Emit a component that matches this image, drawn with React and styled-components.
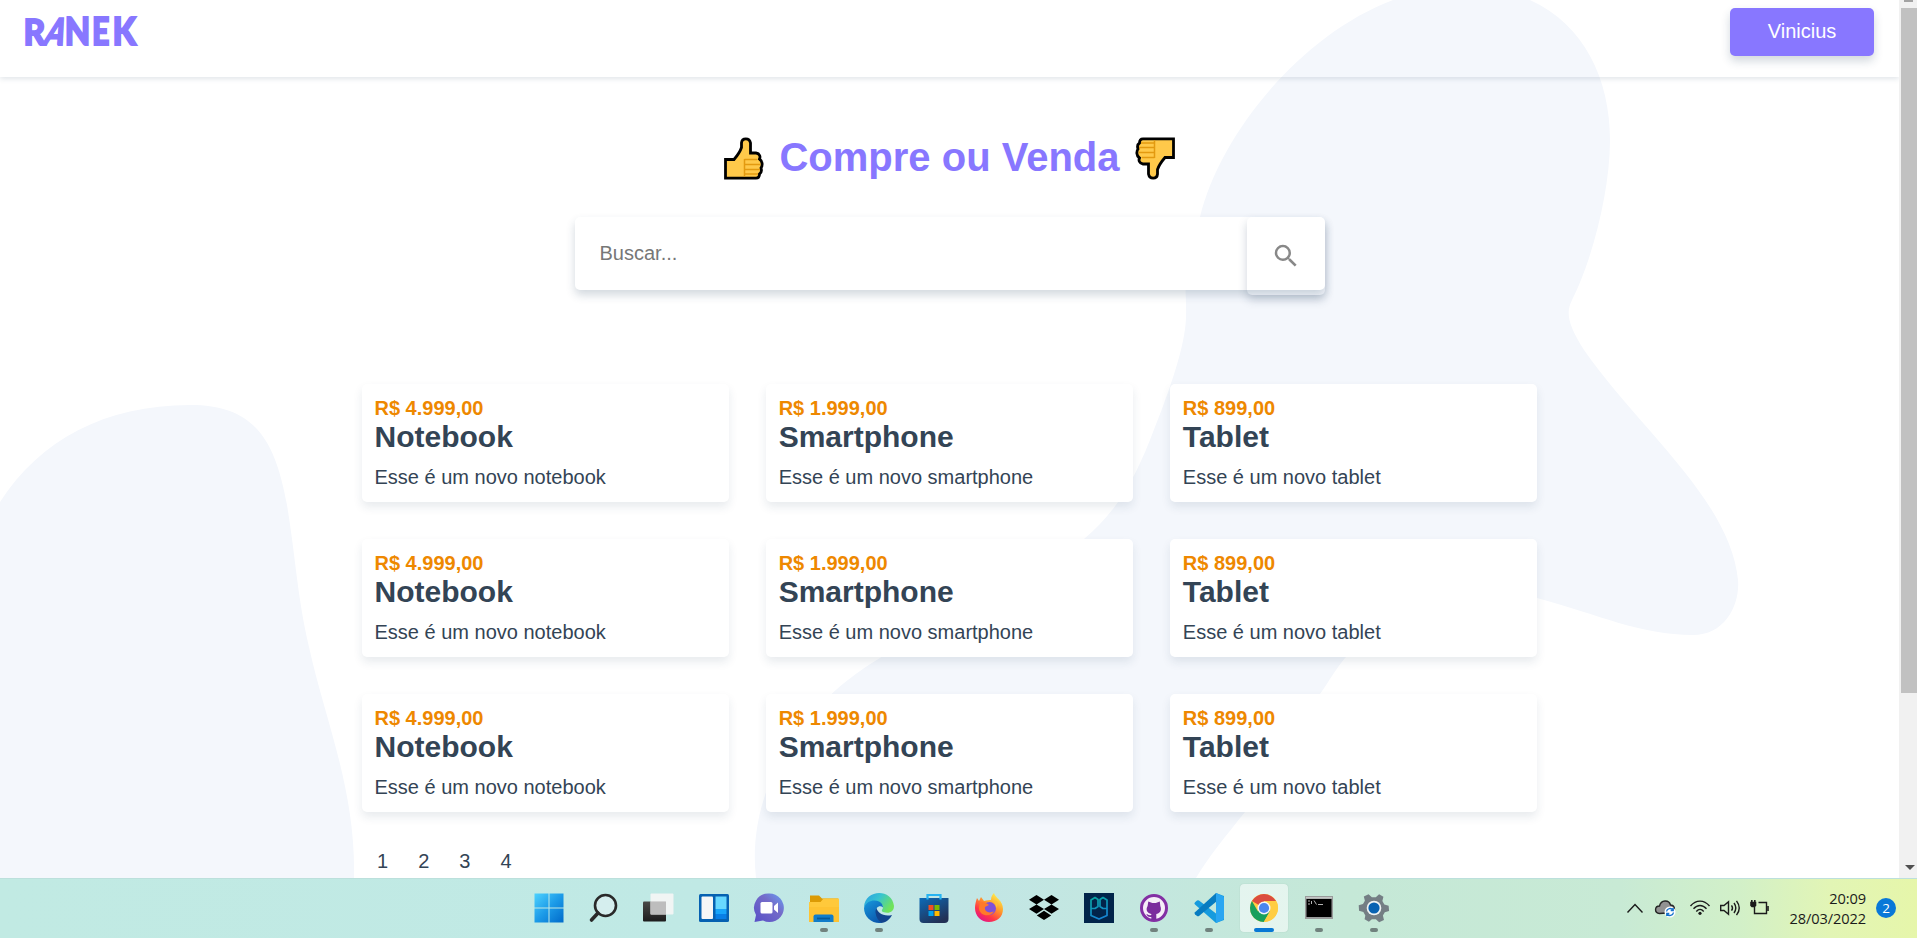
import React from "react";
import styled, { createGlobalStyle } from "styled-components";

const GlobalStyle = createGlobalStyle`
  * { box-sizing: border-box; margin: 0; padding: 0; }
  body { font-family: "Liberation Sans", Arial, sans-serif; color: #345; background: #fff; overflow: hidden; }
  ul { list-style: none; }
  svg { display: block; flex: none; }
`;

const Screen = styled.div`
  width: 1917px;
  height: 938px;
  display: flex;
  flex-direction: column;
  overflow: hidden;
`;

const Browser = styled.div`
  height: 878px;
  display: flex;
  overflow: hidden;
`;

const Page = styled.div`
  position: relative;
  width: 1899px;
  height: 878px;
  overflow: hidden;
  background: #fff;
`;

const Backdrop = styled.svg`
  position: absolute;
  inset: 0;
  fill: #f4f7fc;
`;

const Header = styled.header`
  position: relative;
  height: 77px;
  padding: 8px 25px 0 15px;
  display: flex;
  justify-content: space-between;
  align-items: flex-start;
  box-shadow: 0 2px 5px rgba(30, 60, 90, 0.13);
`;

const Logo = styled.svg`
  margin-top: -8px;
  overflow: visible;
  fill: #87f;
  stroke: #87f;
  stroke-width: 1.8px;
  font-family: Lato, sans-serif;
  font-weight: 900;
  font-size: 37px;
`;

const UserButton = styled.button`
  width: 144px;
  height: 48px;
  padding-bottom: 1px;
  border: 0;
  border-radius: 5px;
  background: #87f;
  color: #fff;
  font: 20px "Liberation Sans", Arial, sans-serif;
  box-shadow: 0 5px 10px rgba(30, 60, 90, 0.2);
`;

const Main = styled.main`
  position: relative;
  width: 1175px;
  margin: 57px auto 0;
`;

const TitleRow = styled.div`
  height: 46px;
  display: flex;
  justify-content: center;
  align-items: flex-start;
  gap: 15px;
  & svg { margin-top: 3px; }
`;

const Title = styled.h1`
  font-size: 40px;
  line-height: 46px;
  color: #87f;
`;

const SearchForm = styled.form`
  width: 750px;
  height: 78px;
  margin: 37px auto 89px;
  display: grid;
  grid-template-columns: 1fr 78px;
`;

const SearchInput = styled.input`
  grid-area: 1 / 1 / 2 / 3;
  height: 73px;
  padding: 0 25px;
  border: 0;
  border-radius: 5px;
  background: #fff;
  font: 20px "Liberation Sans", Arial, sans-serif;
  box-shadow: 0 5px 10px rgba(30, 60, 90, 0.2);
  &::placeholder { color: #777; }
`;

const SearchButton = styled.button`
  grid-area: 1 / 2 / 2 / 3;
  z-index: 1;
  display: grid;
  place-items: center;
  border: 0;
  border-radius: 5px;
  background: transparent;
  box-shadow: 0 5px 10px rgba(30, 60, 90, 0.22);
`;

const Products = styled.div`
  display: grid;
  grid-template-columns: repeat(3, 1fr);
  grid-auto-rows: 117.5px;
  gap: 37.5px;
`;

const Card = styled.article`
  padding: 12.5px;
  border-radius: 5px;
  background: #fff;
  box-shadow: 0 5px 10px rgba(30, 60, 90, 0.1);
`;

const Price = styled.p`
  font-size: 20px;
  line-height: 23px;
  font-weight: bold;
  color: #e80;
`;

const Name = styled.h2`
  font-size: 30px;
  line-height: 34px;
  margin-bottom: 12.5px;
`;

const Description = styled.p`
  font-size: 20px;
  line-height: 23px;
`;

const Pagination = styled.ul`
  display: flex;
  gap: 30px;
  margin: 38px 0 0 15px;
  font-size: 20px;
  line-height: 23px;
`;

const Scrollbar = styled.div`
  width: 18px;
  display: flex;
  flex-direction: column;
  align-items: center;
  background: #f1f1f1;
`;

const ScrollCap = styled.div`
  width: 9px;
  height: 2px;
  margin-bottom: 6px;
  background: #a3a3a3;
`;

const ScrollThumb = styled.div`
  width: 16px;
  height: 685px;
  margin-left: 2px;
  background: #c1c1c1;
`;

const ScrollArrow = styled.div`
  margin: 172px 0 0 3px;
  border: 5px solid transparent;
  border-top-color: #505050;
  border-bottom: 0;
`;

const Taskbar = styled.footer`
  height: 60px;
  display: grid;
  grid-template-columns: 521.5px 880px 1fr;
  background: linear-gradient(90deg, #c1eae3 0, #c0e9e5 700px, #c2e6e6 950px, #c5e8d7 1350px, #c8ead5 1620px, #d2f0c8 1740px, #e2f5b5 1830px, #e6f6aa 1917px);
  border-top: 1px solid #bce0dc;
  & > :first-child { grid-column: 2; }
`;

const AppStrip = styled.div`
  display: flex;
`;

const AppSlot = styled.div`
  position: relative;
  width: 55px;
  height: 58px;
  display: grid;
  place-items: center;
`;

const AppTile = styled.div`
  width: 48px;
  height: 48px;
  display: grid;
  place-items: center;
  border-radius: 4px;
  background: ${(p) => (p.$active ? "rgba(255,255,255,.55)" : "transparent")};
  box-shadow: ${(p) => (p.$active ? "0 0 1px rgba(80,120,100,.35)" : "none")};
`;

const Indicator = styled.span`
  position: absolute;
  bottom: 5px;
  width: ${(p) => (p.$active ? 20 : 8)}px;
  height: 4px;
  border-radius: 2px;
  background: ${(p) => (p.$active ? "#0878d4" : "#71827e")};
`;

const Tray = styled.div`
  display: flex;
  align-items: center;
  justify-content: flex-end;
  padding: 0 21px 1px 0;
  font-family: "Open Sans", "Noto Sans", sans-serif;
  color: #1b1b1b;
`;

const TrayIcon = styled.svg`
  width: ${(p) => p.$w}px;
  height: 20px;
  margin-right: ${(p) => p.$gap}px;
  fill: none;
  stroke: #1b1b1b;
  stroke-width: 1.4;
  overflow: visible;
`;

const Clock = styled.div`
  width: 78px;
  margin-right: 10px;
  font-size: 14.6px;
  line-height: 20.5px;
  text-align: right;
  white-space: nowrap;
  letter-spacing: -0.1px;
`;

const Badge = styled.div`
  width: 20px;
  height: 20px;
  border-radius: 50%;
  background: #0878d8;
  color: #fff;
  font-size: 13.5px;
  line-height: 20px;
  text-align: center;
`;

const thumbBody = "M1.500 22.500H10C13 19 16 15 17.500 10.500V6C18 .5 25.500 .5 26.500 6V16H32C36 16.500 36.500 20 35.500 22C39 24.500 38.500 29 37 31C38 34 37 36 35.500 37C35.500 40 34 41.200 32 41.200H1.500Z";

const Thumb = ({ down }) => (
  <svg width="40" height="43" viewBox="0 0 40 43">
    <g transform={down ? "rotate(180 20 21.500)" : undefined}>
      <path d={thumbBody} fill="#ffc94a" stroke="#000" strokeWidth="2.800" strokeLinejoin="miter" />
      <path d="M20.500 39.500V22M20.500 22.500H33M20.500 27.500H36M20.500 32.500H36M20.500 37H34" fill="none" stroke="#e39a10" strokeWidth="1.500" />
    </g>
  </svg>
);

const icons = {
  windows: (
    <>
      <defs>
        <linearGradient id="win" x1="0" y1="0" x2="30" y2="30" gradientUnits="userSpaceOnUse">
          <stop stopColor="#4fd4ff" /><stop offset=".5" stopColor="#1c9be8" /><stop offset="1" stopColor="#0069c9" />
        </linearGradient>
      </defs>
      <path fill="url(#win)" d="M.5.5h14v14H.5zM15.500.5h14v14h-14zM.5 15.500h14v14H.5zM15.500 15.500h14v14h-14z" />
    </>
  ),
  search: (
    <>
      <circle cx="16.500" cy="12.500" r="10.500" fill="#d5eeee" stroke="#292929" strokeWidth="2.600" />
      <path d="M9 20L2.500 27" stroke="#292929" strokeWidth="3.600" strokeLinecap="round" />
    </>
  ),
  tasks: (
    <>
      <defs>
        <linearGradient id="dark" x2="0" y2="1"><stop stopColor="#4a4a48" /><stop offset="1" stopColor="#1c1c1c" /></linearGradient>
      </defs>
      <rect x="-1" y="8.500" width="23" height="20" rx="1" fill="url(#dark)" />
      <rect x="6.500" y=".5" width="23" height="21" rx="1" fill="#f5f5f5" opacity=".92" />
      <path d="M6.500 8.500H22v13H6.500z" fill="#bdbdbd" />
    </>
  ),
  widgets: (
    <>
      <rect x="0" y="1" width="30" height="28" rx="1.500" fill="#0661b1" />
      <rect x="2.500" y="3.500" width="11.500" height="22.500" rx="1" fill="#f6f6f6" />
      <path fill="#68d8ff" d="M16.500 3.500h11V16h-11z" />
      <path fill="#18a5fa" d="M16.500 16h11v5h-11z" />
      <path fill="#087fe6" d="M16.500 21h11v5h-11z" />
    </>
  ),
  chat: (
    <>
      <defs>
        <linearGradient id="chat" x1="1" y1="0" x2="0" y2="1"><stop stopColor="#69a0f4" /><stop offset=".4" stopColor="#746bc9" /><stop offset="1" stopColor="#5750c7" /></linearGradient>
      </defs>
      <path d="M15 .5a14.300 14.300 0 1 1-6 27L.5 29 2 22A14.300 14.300 0 0 1 15 .5Z" fill="url(#chat)" />
      <rect x="6.500" y="9" width="12" height="11.500" rx="1.500" fill="#fff" />
      <path d="M20 13l4-3.500v10.500l-4-3.500z" fill="#fff" />
    </>
  ),
  files: (
    <>
      <path d="M2 2.500h9l3 3h16v8H2z" fill="#dc9b05" transform="translate(-1)" />
      <path d="M0 9h11.500l3-3.500H30V29H0z" fill="#ffc93b" />
      <path d="M0 14h30v15H0z" fill="#fdc02f" opacity=".7" />
      <path d="M4.500 29v-5.500a2 2 0 0 1 2-2h16a2 2 0 0 1 2 2V29z" fill="#117dca" />
      <path d="M8 25.500h13" stroke="#075998" strokeWidth="1.800" />
    </>
  ),
  edge: (
    <>
      <defs>
        <linearGradient id="edgeTop" x1="0" y1="0" x2="1" y2=".5"><stop stopColor="#279ee4" /><stop offset=".5" stopColor="#38c4d0" /><stop offset="1" stopColor="#70e35b" /></linearGradient>
        <linearGradient id="edgeLow" x1="0" y1="0" x2=".6" y2="1"><stop stopColor="#1899dd" /><stop offset="1" stopColor="#0b59ae" /></linearGradient>
      </defs>
      <path d="M0 14C1-4 28-5 30 13c0 6-5 8-11 6-2-1-1-2 0-4 1-6-10-9-19-1Z" fill="url(#edgeTop)" />
      <path d="M12 12c-6 5-3 17 5 18 5 0 9-4 11-8-8 2-16-2-16-10Z" fill="#12448d" />
      <path d="M0 15C2 8 10 6 15 8.500c3 1.500 4 4 4 6-3-3-8 0-7.500 5 .5 5 3 8 6 10.500C8 31 0 24 0 15Z" fill="url(#edgeLow)" />
    </>
  ),
  store: (
    <>
      <defs><linearGradient id="store" x2=".6" y2="1"><stop stopColor="#0d6bb8" /><stop offset="1" stopColor="#223055" /></linearGradient></defs>
      <path d="M.5 5h29v21a4 4 0 0 1-4 4h-21a4 4 0 0 1-4-4z" fill="url(#store)" />
      <path d="M8.500 6.500V2h13v4.500" fill="none" stroke="#27b4f2" strokeWidth="2.200" />
      <path fill="#f25022" d="M9.500 12H14.500v5h-5z" /><path fill="#7fba00" d="M15.500 12h5v5h-5z" />
      <path fill="#00a4ef" d="M9.500 18h5v5h-5z" /><path fill="#ffb900" d="M15.500 18h5v5h-5z" />
    </>
  ),
  firefox: (
    <>
      <defs><linearGradient id="fox" x1=".9" y1=".1" x2=".3" y2="1"><stop stopColor="#fff44f" /><stop offset=".4" stopColor="#ff9a2a" /><stop offset=".75" stopColor="#ff3647" /><stop offset="1" stopColor="#e31587" /></linearGradient></defs>
      <path d="M3 5l2 3 2-4 3 4c3-1 5-1 7-1 0-4 2-6 3-7 1 5 9 7 9 16 0 8-6 13-14 13S1 23 1 15c0-4 1-7 2-10Z" fill="url(#fox)" />
      <circle cx="15.500" cy="15.500" r="6.500" fill="#8051d7" />
      <path d="M6 9c4 0 7 1 9 3l-4 2c-1 5 5 7 9 4-3 7-15 5-15-3z" fill="#ff7a29" />
      <path d="M17 7c4 1 5 4 5 8 2-2 2-5 1-7" fill="#ffbe36" />
    </>
  ),
  dropbox: <path fill="#000" d="M7.500 2l7.500 4.700-7.500 4.700L0 6.700zM22.500 2L30 6.700l-7.500 4.700L15 6.700zM7.500 11.400l7.500 4.700-7.500 4.700L0 16.100zM22.500 11.400l7.500 4.700-7.500 4.700-7.500-4.700zM15 17.800l7.200 4.700L15 27l-7.200-4.500z" />,
  pg: (
    <>
      <defs><linearGradient id="pg" x2=".3" y2="1"><stop stopColor="#08a7a0" /><stop offset="1" stopColor="#1685d1" /></linearGradient></defs>
      <path fill="#02244a" d="M0 0h30v30H0z" />
      <path d="M7 20V7l4-2.500 3 2v7L11 15.500H7M23 20V7l-4-2.500-3 2v7l3 2h4M7 18v4.500l8 3.500 8-3.500V18" fill="none" stroke="url(#pg)" strokeWidth="1.700" strokeLinejoin="round" />
    </>
  ),
  github: (
    <>
      <circle cx="15" cy="15" r="12.500" fill="#f6edf8" stroke="#832fa4" strokeWidth="3" />
      <path d="M9.300 8.500l4 1.500h3.500l4-1.500.5 4.500c2 5-1 7.500-4 8v6h-5v-3c-3 .5-4-1-5-3 2 0 2 2 5 1v-1c-4-1-6-4-3.700-8z" fill="#7b2b9d" />
    </>
  ),
  vscode: (
    <>
      <path d="M22 0l8 3v24l-8 3L1 11.500q-1.300-1 0-2.300l2-1.700q1-.7 2 0l17 13z" fill="#169bde" />
      <path d="M22 0l1 8L5 23q-1 .7-2 0l-2-1.800q-1-1 0-2z" fill="#087cc1" />
      <path d="M22 0l7 3.200q1 .5 1 1.800v20q0 1.300-1 1.800L22 30z" fill="#2aa6f2" />
    </>
  ),
  chrome: (
    <>
      <circle cx="15" cy="15" r="14" fill="#ffcd42" />
      <path d="M15 15L2.900 8A14 14 0 0 1 27.100 8H15Z" fill="#db4c3f" />
      <path d="M2.900 8A14 14 0 0 0 14.800 29L21.100 18.500 15 15 9 18.500Z" fill="#17a05d" />
      <path d="M15 8.500H27.400A14 14 0 0 1 14.800 29L20.700 18.500Z" fill="#ffcd42" />
      <circle cx="15" cy="15" r="6.500" fill="#f4f6f8" />
      <circle cx="15" cy="15" r="5.100" fill="#4a86ee" />
    </>
  ),
  terminal: (
    <>
      <path fill="#999b9b" d="M1 3h28v23H1z" /><path fill="#c4c6c5" d="M2 4h26v1.500H2z" />
      <path fill="#000" d="M2.500 6h25v18h-25z" />
      <path d="M4 8h2M4 11h2M7.500 8v3M10 7.500l2.500 4M14 11.500h5" stroke="#c7c7c7" strokeWidth=".9" />
    </>
  ),
  settings: (
    <>
      <path d="M12.500.5h5l1.300 4.300 3.400 2 4.400-1 3 4.300-3.100 3.200v3.800l3.100 3.200-3 4.500-4.400-1-3.400 2-1.300 3.700h-5l-1.300-3.700-3.400-2-4.400 1-3-4.500 3.100-3.200v-3.800L.4 10.100l3-4.300 4.400 1 3.400-2z" fill="#747e84" transform="rotate(30 15 15)" />
      <circle cx="15" cy="15" r="7.300" fill="#eff3f4" /><circle cx="15" cy="15" r="5.600" fill="#0862b2" />
    </>
  ),
};

const apps = [
  ["windows"], ["search"], ["tasks"], ["widgets"], ["chat"], ["files", "open"], ["edge", "open"], ["store"],
  ["firefox"], ["dropbox"], ["pg"], ["github", "open"], ["vscode", "open"], ["chrome", "active"], ["terminal", "open"], ["settings", "open"],
];

const catalog = [
  { price: "R$ 4.999,00", name: "Notebook", text: "Esse é um novo notebook" },
  { price: "R$ 1.999,00", name: "Smartphone", text: "Esse é um novo smartphone" },
  { price: "R$ 899,00", name: "Tablet", text: "Esse é um novo tablet" },
];
const products = [...catalog, ...catalog, ...catalog];

export default function App() {
  return (
    <Screen>
      <GlobalStyle />
      <Browser>
        <Page>
          <Backdrop width="1899" height="878" viewBox="0 0 1899 878">
            <path d="M0 502C40 440 105 405 190 405C255 405 275 440 287 505C296 560 297 595 309 647C325 720 356 790 354 878H0Z" />
            <path d="M1393 0C1300 35 1220 135 1200 217C1180 285 1187 285 1186 318C1185 345 1172 385 1150 440C1130 490 1112 515 1084 539C1030 590 940 610 880 658C800 705 746 790 756 878H1196C1210 855 1225 837 1245 812L1320 694C1330 680 1335 670 1345 658C1400 610 1440 570 1537 598C1600 615 1640 635 1693 635C1725 635 1740 605 1738 580C1730 500 1640 430 1584 350C1567 323 1566 312 1572 300C1590 265 1610 195 1610 140C1610 80 1585 25 1530 0Z" />
          </Backdrop>
          <Header>
            <Logo width="134" height="62" viewBox="-10 0 134 62">
              <text transform="translate(-1.500 45.300) scale(.91 1)">R</text>
              <text transform="translate(17 45.300) skewX(-19) scale(.76 1)">A</text>
              <text transform="translate(39.800 45.300) scale(.89 1)">N</text>
              <text transform="translate(67 45.300) scale(.82 1)">E</text>
              <text transform="translate(87.500 45.300) scale(.92 1)">K</text>
            </Logo>
            <UserButton>Vinicius</UserButton>
          </Header>
          <Main>
            <TitleRow>
              <Thumb />
              <Title>Compre ou Venda</Title>
              <Thumb down />
            </TitleRow>
            <SearchForm>
              <SearchInput placeholder="Buscar..." />
              <SearchButton type="button" aria-label="Buscar">
                <svg width="30" height="30" viewBox="0 0 24 24" fill="#888">
                  <path d="M15.500 14h-.79l-.28-.27A6.471 6.471 0 0 0 16 9.500 6.500 6.500 0 1 0 9.500 16c1.610 0 3.090-.59 4.230-1.570l.27.28v.79l5 4.990L20.490 19l-4.990-5zm-6 0C7.010 14 5 11.990 5 9.500S7.010 5 9.500 5 14 7.010 14 9.500 11.990 14 9.500 14z" />
                </svg>
              </SearchButton>
            </SearchForm>
            <Products>
              {products.map((p, i) => (
                <Card key={i}>
                  <Price>{p.price}</Price>
                  <Name>{p.name}</Name>
                  <Description>{p.text}</Description>
                </Card>
              ))}
            </Products>
            <Pagination>
              {[1, 2, 3, 4].map((n) => <li key={n}>{n}</li>)}
            </Pagination>
          </Main>
        </Page>
        <Scrollbar>
          <ScrollCap />
          <ScrollThumb />
          <ScrollArrow />
        </Scrollbar>
      </Browser>
      <Taskbar>
        <AppStrip>
          {apps.map(([id, state]) => (
            <AppSlot key={id}>
              <AppTile $active={state === "active"}>
                <svg width="30" height="30" viewBox="0 0 30 30" overflow="visible">{icons[id]}</svg>
              </AppTile>
              {state && <Indicator $active={state === "active"} />}
            </AppSlot>
          ))}
        </AppStrip>
        <Tray>
          <TrayIcon $w={16} $gap={12} viewBox="0 0 16 20"><path d="M.5 14.500L8 6.500l7.500 8" /></TrayIcon>
          <TrayIcon $w={20} $gap={15} viewBox="0 0 20 20">
            <path d="M4.500 15.500C-1 15-.5 8 4.500 8 6 1.500 14 1.500 15.500 7c4 0 5 4.500 3 7.500z" fill="#929292" stroke="#252525" />
            <circle cx="15" cy="14" r="5.500" fill="#fff" stroke="none" />
            <path d="M11.500 13.500a3.600 3.600 0 0 1 6.500-1.500m.2-2v2.500h-2.500M18.500 14.500a3.600 3.600 0 0 1-6.500 1.500m-.2 2v-2.500h2.500" stroke="#1672cd" />
          </TrayIcon>
          <TrayIcon $w={20} $gap={10} viewBox="0 0 20 20">
            <path d="M.5 8C6 1.500 14 1.500 19.500 8M3.500 10.800c4-4.500 9-4.500 13 0M6.300 13.500c2.500-2.800 5-2.800 7.400 0" />
            <circle cx="10" cy="15.300" r="1.600" fill="#1b1b1b" stroke="none" />
          </TrayIcon>
          <TrayIcon $w={20} $gap={10} viewBox="0 0 20 20">
            <path d="M.7 7.500v5H4l4.500 3.700V3.800L4 7.500zM11.500 7.300q2 2.700 0 5.400M14 5q3.600 5 0 10M16.500 2.800q5.500 7.200 0 14.400" />
          </TrayIcon>
          <TrayIcon $w={20} $gap={18} viewBox="0 0 20 20">
            <path d="M8.500 4.500h8v11h-12V9" />
            <path d="M1 4.500h4.500v3L4.500 8.500H2L1 7.500zM1.800 2v3M4.800 2v3M18 8v5" fill="#1b1b1b" strokeWidth="1.600" />
          </TrayIcon>
          <Clock>20:09<br />28/03/2022</Clock>
          <Badge>2</Badge>
        </Tray>
      </Taskbar>
    </Screen>
  );
}
